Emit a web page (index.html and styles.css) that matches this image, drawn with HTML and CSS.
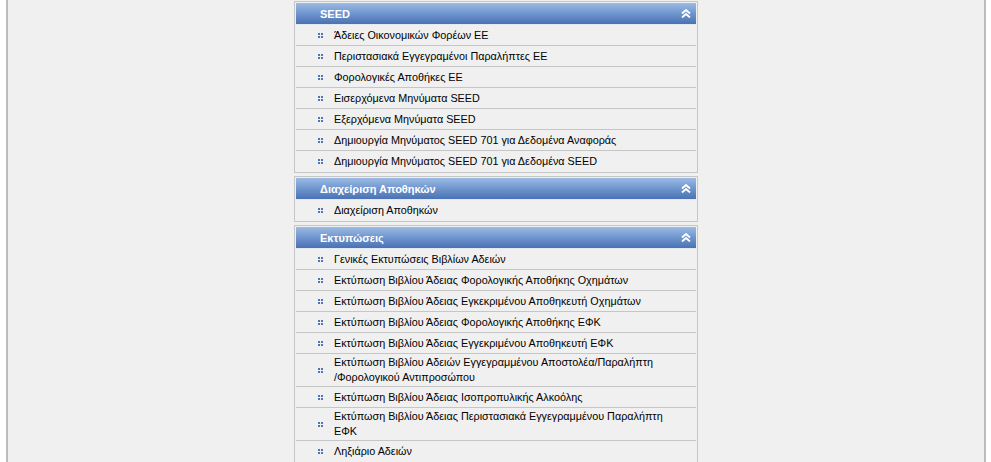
FILE: index.html
```html
<!DOCTYPE html>
<html lang="el">
<head>
<meta charset="UTF-8">
<title>Μενού</title>
<link rel="stylesheet" href="styles.css">
</head>
<body>
<div class="page">
    <div class="menu">

        <div class="panel">
            <div class="panel-head">
                <span>SEED</span>
                <svg class="chev" width="10" height="9" viewBox="0 0 10 9"><path d="M1 4.5 L5 1 L9 4.5 M1 8.5 L5 5 L9 8.5" fill="none" stroke="#fff" stroke-width="1.8"/></svg>
            </div>
            <ul class="panel-list">
                <li><a href="#"><i class="dot"></i><span>Άδειες Οικονομικών Φορέων ΕΕ</span></a></li>
                <li><a href="#"><i class="dot"></i><span>Περιστασιακά Εγγεγραμένοι Παραλήπτες ΕΕ</span></a></li>
                <li><a href="#"><i class="dot"></i><span>Φορολογικές Αποθήκες ΕΕ</span></a></li>
                <li><a href="#"><i class="dot"></i><span>Εισερχόμενα Μηνύματα SEED</span></a></li>
                <li><a href="#"><i class="dot"></i><span>Εξερχόμενα Μηνύματα SEED</span></a></li>
                <li><a href="#"><i class="dot"></i><span>Δημιουργία Μηνύματος SEED 701 για Δεδομένα Αναφοράς</span></a></li>
                <li><a href="#"><i class="dot"></i><span>Δημιουργία Μηνύματος SEED 701 για Δεδομένα SEED</span></a></li>
            </ul>
        </div>

        <div class="panel">
            <div class="panel-head">
                <span>Διαχείριση Αποθηκών</span>
                <svg class="chev" width="10" height="9" viewBox="0 0 10 9"><path d="M1 4.5 L5 1 L9 4.5 M1 8.5 L5 5 L9 8.5" fill="none" stroke="#fff" stroke-width="1.8"/></svg>
            </div>
            <ul class="panel-list">
                <li><a href="#"><i class="dot"></i><span>Διαχείριση Αποθηκών</span></a></li>
            </ul>
        </div>

        <div class="panel">
            <div class="panel-head">
                <span>Εκτυπώσεις</span>
                <svg class="chev" width="10" height="9" viewBox="0 0 10 9"><path d="M1 4.5 L5 1 L9 4.5 M1 8.5 L5 5 L9 8.5" fill="none" stroke="#fff" stroke-width="1.8"/></svg>
            </div>
            <ul class="panel-list">
                <li><a href="#"><i class="dot"></i><span>Γενικές Εκτυπώσεις Βιβλίων Αδειών</span></a></li>
                <li><a href="#"><i class="dot"></i><span>Εκτύπωση Βιβλίου Άδειας Φορολογικής Αποθήκης Οχημάτων</span></a></li>
                <li><a href="#"><i class="dot"></i><span>Εκτύπωση Βιβλίου Άδειας Εγκεκριμένου Αποθηκευτή Οχημάτων</span></a></li>
                <li><a href="#"><i class="dot"></i><span>Εκτύπωση Βιβλίου Άδειας Φορολογικής Αποθήκης ΕΦΚ</span></a></li>
                <li><a href="#"><i class="dot"></i><span>Εκτύπωση Βιβλίου Άδειας Εγγεκριμένου Αποθηκευτή ΕΦΚ</span></a></li>
                <li><a href="#"><i class="dot"></i><span>Εκτύπωση Βιβλίου Αδειών Εγγεγραμμένου Αποστολέα/Παραλήπτη /&#8288;Φορολογικού Αντιπροσώπου</span></a></li>
                <li><a href="#"><i class="dot"></i><span>Εκτύπωση Βιβλίου Άδειας Ισοπροπυλικής Αλκοόλης</span></a></li>
                <li><a href="#"><i class="dot"></i><span>Εκτύπωση Βιβλίου Άδειας Περιστασιακά Εγγεγραμμένου Παραλήπτη ΕΦΚ</span></a></li>
                <li><a href="#"><i class="dot"></i><span>Ληξιάριο Αδειών</span></a></li>
            </ul>
        </div>

    </div>
</div>
</body>
</html>
```

FILE: styles.css
```css
/* Μενού εφαρμογής */
body {
    margin: 0;
    padding: 0;
    background-color: #fff;
    font-family: "Liberation Sans", Arial, sans-serif;
    font-size: 10.8px;
    color: #000;
}

.page {
    margin-left: 6px;
    width: 976px;
    min-height: 462px;
    background-color: #f0f0f0;
    border-left: 2px solid #bcbcbc;
    border-right: 2px solid #bcbcbc;
    padding-top: 1px;
}

.menu {
    width: 404px;
    margin: 0 auto;
}

.panel {
    border: 1px solid #c6c6c6;
    padding: 1px;
    margin-bottom: 3px;
}

.panel-head {
    display: flex;
    align-items: center;
    justify-content: space-between;
    height: 21px;
    padding: 0 5px 0 24px;
    background: linear-gradient(#9cbbe4 0%, #7399d0 45%, #4a72b4 100%);
    border-bottom: 1px solid #e4e9f0;
    color: #fff;
    font-size: 11px;
    font-weight: bold;
}

.chev {
    display: block;
}

.panel-list {
    list-style: none;
    margin: 0;
    padding: 0;
}

.panel-list li {
    border-bottom: 1px solid #c6c6c6;
}

.panel-list li:last-child {
    border-bottom: none;
}

.panel-list a {
    display: flex;
    align-items: center;
    box-sizing: border-box;
    min-height: 20px;
    padding: 1px 26px 1px 22px;
    line-height: 15px;
    color: #000;
    text-decoration: none;
}

.dot {
    flex: none;
    position: relative;
    width: 5px;
    height: 5px;
    margin-right: 11px;
}

.dot::before {
    content: "";
    position: absolute;
    left: 0;
    top: 0;
    width: 2px;
    height: 2px;
    background-color: #5075b6;
    box-shadow: 3px 0 0 #5075b6, 0 3px 0 #5075b6, 3px 3px 0 #5075b6;
}
```
